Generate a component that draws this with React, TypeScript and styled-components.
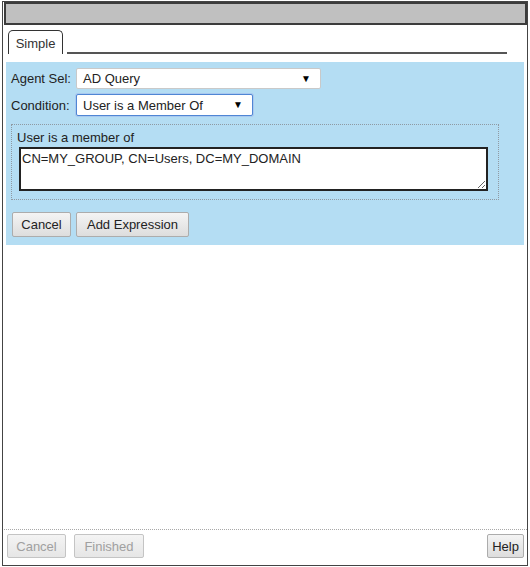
import React from "react";
import styled, { createGlobalStyle } from "styled-components";

const GlobalStyle = createGlobalStyle`
  html, body { margin: 0; padding: 0; background: #ffffff; }
  body { font-family: "Liberation Sans", Arial, sans-serif; font-size: 13px; color: #222; }
  * { box-sizing: border-box; }
`;

const Window = styled.div`
  margin: 1px 0 0 2px;
  width: 526px;
  height: 565px;
  border: 1px solid #444;
  display: flex;
  flex-direction: column;
  background: #fff;
`;

const TitleBar = styled.div`
  margin-left: 1px;
  height: 23px;
  background: #c0c0c0;
  border: 2px solid #3c3c3c;
`;

const TabStrip = styled.div`
  display: flex;
  align-items: flex-end;
  margin: 5px 20px 0 5px;
  height: 24px;
`;

const Tab = styled.div`
  width: 55px;
  height: 24px;
  border: 1px solid #333;
  border-bottom: none;
  border-radius: 5px 5px 0 0;
  display: flex;
  align-items: center;
  justify-content: center;
  padding-top: 2px;
  color: #333;
  font-size: 13px;
`;

const TabLine = styled.div`
  flex: 1;
  margin-left: 4px;
  border-bottom: 2px solid #555;
`;

const Panel = styled.div`
  margin: 8px 3px 0 3px;
  background: #b4ddf3;
  padding: 6px 5px 8px 5px;
  display: flex;
  flex-direction: column;
`;

const FieldRow = styled.div<{ $gap?: number }>`
  display: flex;
  align-items: center;
  margin-top: ${(p) => p.$gap ?? 0}px;
`;

const Label = styled.span`
  width: 65px;
  white-space: nowrap;
  color: #222;
`;

const Select = styled.div<{ $width: number; $focused?: boolean }>`
  width: ${(p) => p.$width}px;
  height: ${(p) => (p.$focused ? 22 : 21)}px;
  background: #fff;
  border: 1px solid ${(p) => (p.$focused ? "#4f86d4" : "#c9c9c9")};
  box-shadow: ${(p) => (p.$focused ? "0 0 0 1px #a9c9ef" : "none")};
  border-radius: 2px;
  display: flex;
  align-items: center;
  justify-content: space-between;
  padding: 0 9px 0 6px;
  color: #222;
`;

const Arrow = styled.span`
  font-size: 10px;
  color: #000;
  line-height: 1;
`;

const Fieldset = styled.div`
  margin-top: 8px;
  width: 488px;
  height: 76px;
  border: 1px dotted #8f9aa3;
  padding: 5px 0 0 5px;
`;

const Legend = styled.div`
  line-height: 16px;
  color: #222;
`;

const TextArea = styled.textarea`
  display: block;
  margin: 1px 0 0 2px;
  width: 469px;
  height: 44px;
  border: 2px solid #222;
  padding: 2px 1px;
  font-family: "Liberation Sans", Arial, sans-serif;
  font-size: 13px;
  color: #222;
  background: #fff;
  outline: none;
`;

const ButtonRow = styled.div`
  display: flex;
  gap: 5px;
  margin-top: 12px;
  padding-left: 1px;
`;

const Button = styled.button<{ $width: number; $height?: number }>`
  width: ${(p) => p.$width}px;
  height: ${(p) => p.$height ?? 25}px;
  padding: 0;
  font-family: "Liberation Sans", Arial, sans-serif;
  font-size: 13px;
  color: #222;
  background: linear-gradient(#f4f4f4, #dddddd);
  border: 1px solid #acacac;
  border-radius: 2px;
  &:disabled {
    color: #a0a0a0;
    border-color: #c4c4c4;
    background: linear-gradient(#f4f4f4, #e6e6e6);
  }
`;

const Spacer = styled.div`
  flex: 1;
`;

const Footer = styled.div`
  margin-left: 1px;
  border-top: 1px dotted #a8a8a8;
  padding: 4px 3px 7px 3px;
  display: flex;
  align-items: center;
  gap: 8px;
`;

export default function App() {
  return (
    <>
      <GlobalStyle />
      <Window>
        <TitleBar />
        <TabStrip>
          <Tab>Simple</Tab>
          <TabLine />
        </TabStrip>
        <Panel>
          <FieldRow>
            <Label>Agent Sel:</Label>
            <Select $width={245}>
              <span>AD Query</span>
              <Arrow>▼</Arrow>
            </Select>
          </FieldRow>
          <FieldRow $gap={5}>
            <Label>Condition:</Label>
            <Select $width={177} $focused>
              <span>User is a Member Of</span>
              <Arrow>▼</Arrow>
            </Select>
          </FieldRow>
          <Fieldset>
            <Legend>User is a member of</Legend>
            <TextArea defaultValue="CN=MY_GROUP, CN=Users, DC=MY_DOMAIN" />
          </Fieldset>
          <ButtonRow>
            <Button $width={59}>Cancel</Button>
            <Button $width={113}>Add Expression</Button>
          </ButtonRow>
        </Panel>
        <Spacer />
        <Footer>
          <Button $width={59} $height={24} disabled>
            Cancel
          </Button>
          <Button $width={70} $height={24} disabled>
            Finished
          </Button>
          <Spacer />
          <Button $width={37} $height={24}>
            Help
          </Button>
        </Footer>
      </Window>
    </>
  );
}
